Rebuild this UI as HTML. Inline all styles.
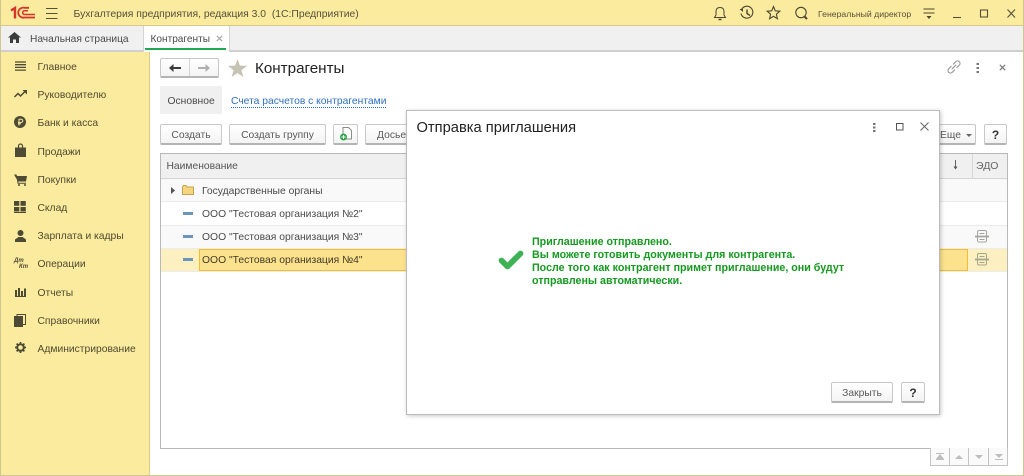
<!DOCTYPE html>
<html><head><meta charset="utf-8"><style>
*{box-sizing:border-box}
html,body{margin:0;padding:0;width:1024px;height:476px;overflow:hidden;background:#fff}
body{font-family:"Liberation Sans",sans-serif;font-size:10.3px;color:#4a4a4a;position:relative}
#w{position:absolute;left:0;top:0;width:1024px;height:476px;filter:blur(.3px)}
.a{position:absolute;white-space:nowrap}
.btn{position:absolute;height:21px;background:linear-gradient(#fff,#f3f3f3);border:1px solid #c8c8c8;border-bottom:2px solid #b4b4b4;border-radius:2px;text-align:center;line-height:22px;color:#5a5a5a;font-size:10.3px;white-space:nowrap}
.m{position:absolute;left:37.5px;font-size:10.3px;color:#4f4a30;white-space:nowrap;line-height:14px}
svg{position:absolute;overflow:visible}
.row{position:absolute;left:161px;width:846px;height:23px;border-bottom:1px solid #ececec}
.t{position:absolute;left:202px;color:#4a4a4a;white-space:nowrap;line-height:14px;font-size:10.33px}
</style></head><body><div id="w">
<!-- header -->
<div class="a" style="left:0;top:0;width:1024px;height:26px;background:#fbeb9e;border-bottom:1px solid #d8c988"></div>
<div class="a" style="left:0;top:26px;width:1024px;height:26px;background:#f0f0f0;border-bottom:2px solid #cfcfcf"></div>
<div class="a" style="left:0;top:52px;width:150px;height:424px;background:#fbeb9e;border-right:1px solid #d8cd8f"></div>
<div class="a" style="left:0;top:0;width:1px;height:476px;background:#cfc792"></div>
<div class="a" style="left:1023px;top:0;width:1px;height:476px;background:#cfc792"></div>
<div class="a" style="left:0;top:475px;width:1024px;height:1px;background:#cfc792"></div>
<!-- logo -->
<svg style="left:0;top:0" width="60" height="26" viewBox="0 0 60 26" fill="none" stroke="#d8322a"><path d="M11 10.500 15 8V18.500" stroke-width="2.400"/><path d="M35 17.500H24.500A5 5 0 1 1 24.500 7.800H29" stroke-width="1.800"/><path d="M35 14.500H24.500A1.800 1.800 0 1 1 24.500 10.800H28" stroke-width="1.500"/></svg>
<svg style="left:46px;top:8px" width="12" height="11"><path d="M0 .5H11.500M0 5.500H11.500M0 10.500H11.500" stroke="#55503a" stroke-width="1"/></svg>
<div class="a" style="left:73.500px;top:8px;font-size:10.37px;line-height:14px;color:#55503a">Бухгалтерия предприятия, редакция 3.0&nbsp; (1С:Предприятие)</div>
<!-- top right icons -->
<svg style="left:712px;top:5px" width="16" height="16" fill="none" stroke="#4a4632" stroke-width="1"><path d="M2.500 12.500H13.500L12 10V6.500C12 4 10.500 2.500 8 2.500S4 4 4 6.500V10Z"/><path d="M6.500 14.500H9.500" stroke-width="1.500"/></svg>
<svg style="left:739px;top:5px" width="16" height="16" fill="none" stroke="#4a4632" stroke-width="1.100"><path d="M2.500 4.500A6 6 0 1 1 2 8.500"/><path d="M8 4.500V8.500L11 10.500" stroke-width="1.400"/><path d="M.5 4H4V7Z" fill="#4a4632" stroke="none"/></svg>
<svg style="left:766px;top:5px" width="15" height="15" fill="none" stroke="#4a4632" stroke-width="1.100"><path d="M7.500 1.500 9.300 5.800 13.800 6.200 10.400 9.200 11.400 13.700 7.500 11.300 3.600 13.700 4.600 9.200 1.200 6.200 5.700 5.800Z"/></svg>
<svg style="left:794px;top:5px" width="16" height="16" fill="none" stroke="#4a4632" stroke-width="1.100"><circle cx="7" cy="7.500" r="5.200"/><path d="M10.500 11.500 13 14" stroke-width="2"/></svg>
<div class="a" style="left:818px;top:8px;font-size:8.700px;line-height:12px;color:#55503a">Генеральный директор</div>
<svg style="left:923px;top:8px" width="12" height="11"><path d="M.5 1H11.500M.5 5H11.500" stroke="#4a4632" stroke-width="1"/><path d="M3.500 8H8.500L6 11Z" fill="#4a4632"/></svg>
<svg style="left:952px;top:8px" width="64" height="12" fill="none" stroke="#55503a" stroke-width="1.100"><path d="M1 9.500H9"/><rect x="28.500" y="2" width="7" height="7"/><path d="M55.500 1.500 63 9.500M63 1.500 55.500 9.500"/></svg>
<!-- tabs -->
<svg style="left:8px;top:32px" width="13" height="11"><path d="M6.500 0 13 5.500H11V11H8V7.500H5V11H2V5.500H0Z" fill="#3c3c3c"/></svg>
<div class="a" style="left:30px;top:33px;line-height:14px;color:#4a4a4a;font-size:10.2px">Начальная страница</div>
<div class="a" style="left:143px;top:26px;width:87px;height:26px;background:#fff;border-left:1px solid #d4d4d4;border-right:1px solid #d4d4d4"></div>
<div class="a" style="left:145px;top:48px;width:81px;height:2px;background:#1fa84f"></div>
<div class="a" style="left:150.500px;top:32.500px;line-height:14px;color:#4a4a4a;font-size:10.1px">Контрагенты</div>
<svg style="left:216px;top:35px" width="7" height="7"><path d="M.8.8 6.200 6.200M6.200.8 .8 6.200" stroke="#aaa" stroke-width="1.200"/></svg>
<!-- sidebar -->
<svg style="left:15px;top:61px" width="11" height="11"><path d="M0 1H11M0 3.700H11M0 6.400H11M0 9.100H11" stroke="#4d4a35" stroke-width="1.300"/></svg>
<div class="m" style="top:61px">Главное</div>
<svg style="left:14px;top:90px" width="13" height="8"><path d="M.5 7 4 3.500 6.500 6 11 1.500" fill="none" stroke="#4d4a35" stroke-width="1.500"/><path d="M8.500 0H13V4.500Z" fill="#4d4a35"/></svg>
<div class="m" style="top:89px">Руководителю</div>
<svg style="left:14px;top:116px" width="12" height="12"><circle cx="6" cy="6" r="6" fill="#4d4a35"/><path d="M5 9.500V3.200H7.200A1.600 1.600 0 0 1 7.200 6.400H4M4 7.800H7" fill="none" stroke="#fbeb9e" stroke-width="1"/></svg>
<div class="m" style="top:117px">Банк и касса</div>
<svg style="left:15px;top:144px" width="11" height="13"><path d="M0 3.500H11V13H0Z" fill="#4d4a35"/><path d="M3.500 4V2A2 2 0 0 1 7.500 2V4" fill="none" stroke="#4d4a35" stroke-width="1.200"/></svg>
<div class="m" style="top:146px">Продажи</div>
<svg style="left:14px;top:174px" width="13" height="12"><path d="M0 .5H2.500L3 2H13L12 7.500H4Z" fill="#4d4a35"/><path d="M3 2 4 9.300H12" fill="none" stroke="#4d4a35"/><circle cx="5" cy="11" r="1" fill="#4d4a35"/><circle cx="11" cy="11" r="1" fill="#4d4a35"/></svg>
<div class="m" style="top:174px">Покупки</div>
<svg style="left:14px;top:201px" width="12" height="12" fill="#4d4a35"><rect width="5.300" height="4.800"/><rect x="6.500" width="5.300" height="4.800"/><rect y="6" width="5.300" height="4.500"/><rect x="6.500" y="6" width="5.300" height="4.500"/><rect y="11" width="12" height="1"/></svg>
<div class="m" style="top:202px">Склад</div>
<svg style="left:15px;top:230px" width="11" height="12" fill="#4d4a35"><circle cx="5.500" cy="3" r="3"/><path d="M0 12V9.500L3.500 7H7.500L11 9.500V12Z"/></svg>
<div class="m" style="top:230px">Зарплата и кадры</div>
<div class="a" style="left:14px;top:258px;font-size:6px;font-style:italic;font-weight:bold;color:#4d4a35;line-height:7px">Дт</div>
<div class="a" style="left:19px;top:264px;font-size:6px;font-style:italic;font-weight:bold;color:#4d4a35;line-height:7px">Кт</div>
<div class="m" style="top:258px">Операции</div>
<svg style="left:15px;top:287px" width="11" height="10" fill="#4d4a35"><rect y="3" width="2" height="6"/><rect x="3" y="1" width="2" height="8"/><rect x="6" y="4" width="2" height="5"/><rect x="9" y="1.500" width="2" height="7.500"/><rect y="9" width="11" height="1"/></svg>
<div class="m" style="top:287px">Отчеты</div>
<svg style="left:14px;top:314px" width="12" height="13"><rect x="3" y=".5" width="8.500" height="10" fill="none" stroke="#4d4a35"/><rect y="2" width="9" height="11" fill="#4d4a35"/></svg>
<div class="m" style="top:315px">Справочники</div>
<svg style="left:15px;top:342px" width="11" height="11"><circle cx="5.500" cy="5.500" r="3.300" fill="none" stroke="#4d4a35" stroke-width="2"/><path d="M5.500 0V2M5.500 9V11M0 5.500H2M9 5.500H11M1.600 1.600 3 3M8 8 9.400 9.400M9.400 1.600 8 3M3 8 1.600 9.400" stroke="#4d4a35" stroke-width="1.700"/></svg>
<div class="m" style="top:343px">Администрирование</div>
<!-- content header -->
<div class="btn" style="left:160px;top:58px;width:59px;height:20px"></div>
<div class="a" style="left:189px;top:59px;width:1px;height:17px;background:#d4d4d4"></div>
<svg style="left:169px;top:64px" width="12" height="8"><path d="M0 4 4.500 0V3H12V5H4.500V8Z" fill="#3c3c3c"/></svg>
<svg style="left:198px;top:64px" width="12" height="8"><path d="M12 4 7.500 0V3H0V5H7.500V8Z" fill="#b0b0b0"/></svg>
<svg style="left:228px;top:58.500px" width="19" height="18"><path d="M9.500 0 11.900 6.600 19 6.900 13.400 11.200 15.400 18 9.500 14 3.600 18 5.600 11.200 0 6.900 7.100 6.600Z" fill="#c6c2b4"/></svg>
<div class="a" style="left:255px;top:60px;font-size:15.2px;line-height:18px;color:#222">Контрагенты</div>
<svg style="left:947px;top:60px" width="14" height="14" fill="none" stroke="#9a9a9a" stroke-width="1.100"><path d="M6 4.500 8.800 1.700A2.400 2.400 0 0 1 12.300 5.200L9.500 8"/><path d="M8 9.500 5.200 12.300A2.400 2.400 0 0 1 1.700 8.800L4.500 6"/><path d="M4.800 9.200 9.200 4.800"/></svg>
<svg style="left:976px;top:63px" width="4" height="10" fill="#777"><rect x=".5" width="2.500" height="2"/><rect x=".5" y="4" width="2.500" height="2"/><rect x=".5" y="8" width="2.500" height="2"/></svg>
<svg style="left:999px;top:64px" width="7" height="7"><path d="M.8.8 6.200 6.200M6.200.8 .8 6.200" stroke="#777" stroke-width="1.100"/></svg>
<div class="a" style="left:160px;top:86px;width:62px;height:28px;background:#f0f0f0;border-radius:2px"></div>
<div class="a" style="left:167.500px;top:94.500px;line-height:14px;color:#4a4a4a;font-size:10.3px">Основное</div>
<div class="a" style="left:231px;top:94.500px;line-height:14px;color:#2f6fc0;font-size:10.3px;border-bottom:1px dotted #2f6fc0;height:13px">Счета расчетов с контрагентами</div>
<!-- toolbar -->
<div class="btn" style="left:160px;top:124px;width:62px">Создать</div>
<div class="btn" style="left:229px;top:124px;width:97px">Создать группу</div>
<div class="btn" style="left:333px;top:124px;width:25px"></div>
<svg style="left:340px;top:127px" width="12" height="14"><path d="M3 .5H8.500L11.500 3.500V12H3Z" fill="#fff" stroke="#8a8f80"/><circle cx="3.500" cy="10" r="3.500" fill="#2fa84a"/><path d="M1.500 10H5.500M3.500 8V12" stroke="#fff"/></svg>
<div class="btn" style="left:365px;top:124px;width:60px;text-align:left;padding-left:11px">Досье</div>
<div class="btn" style="left:920px;top:124px;width:56px;text-align:right;padding-right:14px">Еще</div>
<svg style="left:966px;top:134px" width="6" height="3"><path d="M0 0H6L3 3Z" fill="#666"/></svg>
<div class="btn" style="left:984px;top:124px;width:23px;font-weight:bold;font-size:12px;line-height:20px;color:#333">?</div>
<!-- table -->
<div class="a" style="left:160px;top:153px;width:848px;height:296px;border:1px solid #b8b8b8"></div>
<div class="a" style="left:161px;top:154px;width:846px;height:25px;background:#f0f0f0;border-bottom:1px solid #d4d4d4"></div>
<div class="a" style="left:166.500px;top:159.500px;line-height:14px;color:#555;font-size:10.3px">Наименование</div>
<div class="a" style="left:972px;top:154px;width:1px;height:25px;background:#d8d8d8"></div>
<svg style="left:953px;top:160px" width="5" height="10"><path d="M2.500 0V8" stroke="#555" stroke-width=".9"/><path d="M.5 6.500H4.500L2.500 9.500Z" fill="#555"/></svg>
<div class="a" style="left:976px;top:158.500px;line-height:14px;color:#666;font-size:10.5px">ЭДО</div>
<div class="row" style="top:179px;height:23px;background:#f9f9f9"></div>
<div class="row" style="top:202px;height:24px;background:#fff"></div>
<div class="row" style="top:226px;height:23px;background:#f9f9f9"></div>
<div class="row" style="top:249px;height:23px;background:#fdf0c0"></div>
<div class="a" style="left:199px;top:249px;width:769px;height:22px;background:#fde28e;border:1px solid #f2bd2f"></div>
<svg style="left:171px;top:187px" width="4" height="7"><path d="M0 0 4 3.500 0 7Z" fill="#555"/></svg>
<svg style="left:182px;top:185px" width="12" height="10"><path d="M.5 2V9.500H11.500V2H5L4 .5H1.500Z" fill="#f5d580" stroke="#c9a24c"/></svg>
<div class="t" style="top:184.500px">Государственные органы</div>
<div class="a" style="left:183px;top:212px;width:10px;height:3px;background:#6b95ba"></div>
<div class="t" style="top:208px">ООО "Тестовая организация №2"</div>
<div class="a" style="left:183px;top:235px;width:10px;height:3px;background:#6b95ba"></div>
<div class="t" style="top:231px">ООО "Тестовая организация №3"</div>
<div class="a" style="left:183px;top:258px;width:10px;height:3px;background:#6b95ba"></div>
<div class="t" style="top:254px;color:#3f3a25">ООО "Тестовая организация №4"</div>
<svg style="left:975px;top:230px" width="14" height="13" fill="none" stroke="#a5a5a0"><rect x="2.500" y=".5" width="9" height="11.500" rx="1.500"/><path d="M4.500 3.500H9.500M4.500 9.500H9.500"/><path d="M0 6.500H14" stroke-width="1.800"/></svg>
<svg style="left:975px;top:253px" width="14" height="13" fill="none" stroke="#a5a58c"><rect x="2.500" y=".5" width="9" height="11.500" rx="1.500"/><path d="M4.500 3.500H9.500M4.500 9.500H9.500"/><path d="M0 6.500H14" stroke-width="1.800"/></svg>
<!-- bottom nav -->
<div class="a" style="left:930px;top:448px;width:78px;height:18px;border:1px solid #c4c4c4;border-top:none;background:#fafafa"></div>
<div class="a" style="left:949px;top:448px;width:1px;height:18px;background:#c4c4c4"></div>
<div class="a" style="left:968px;top:448px;width:1px;height:18px;background:#c4c4c4"></div>
<div class="a" style="left:988px;top:448px;width:1px;height:18px;background:#c4c4c4"></div>
<svg style="left:936px;top:453px" width="68" height="8" fill="#bdbdbd"><path d="M0 0H8V1H0ZM4 1 8 6H0ZM0 6H8V7H0Z"/><path d="M19 6 23 2 27 6Z"/><path d="M39 2H47L43 6Z"/><path d="M59 1H67L63 5ZM59 6H67V7H59Z"/></svg>
<!-- dialog -->
<div class="a" style="left:406px;top:110px;width:534px;height:305px;background:#fff;border:1px solid #bcbcbc;box-shadow:1px 1px 4px rgba(0,0,0,.22)"></div>
<div class="a" style="left:416.500px;top:119px;font-size:14.7px;line-height:18px;color:#222">Отправка приглашения</div>
<svg style="left:873px;top:123px" width="3" height="9" fill="#777"><rect width="2.500" height="2"/><rect y="3.500" width="2.500" height="2"/><rect y="7" width="2.500" height="2"/></svg>
<svg style="left:896px;top:123px" width="8" height="8"><rect x=".5" y=".5" width="6.500" height="6.500" fill="none" stroke="#555"/></svg>
<svg style="left:920px;top:122px" width="9" height="9"><path d="M.5.5 8.500 8.500M8.500.5 .5 8.500" stroke="#666" stroke-width="1"/></svg>
<svg style="left:498px;top:250px" width="26" height="20"><path d="M3.500 10.500 9.500 16.500 22.500 3.500" fill="none" stroke="#3eb254" stroke-width="5.800" stroke-linecap="round" stroke-linejoin="round"/></svg>
<div class="a" style="left:532px;top:235.500px;font-size:10.69px;line-height:13px;font-weight:bold;color:#159a20">Приглашение отправлено.<br>Вы можете готовить документы для контрагента.<br>После того как контрагент примет приглашение, они будут<br>отправлены автоматически.</div>
<div class="btn" style="left:831px;top:382px;width:62px">Закрыть</div>
<div class="btn" style="left:901px;top:382px;width:24px;font-weight:bold;font-size:12px;line-height:20px;color:#333">?</div>
</div></body></html>
